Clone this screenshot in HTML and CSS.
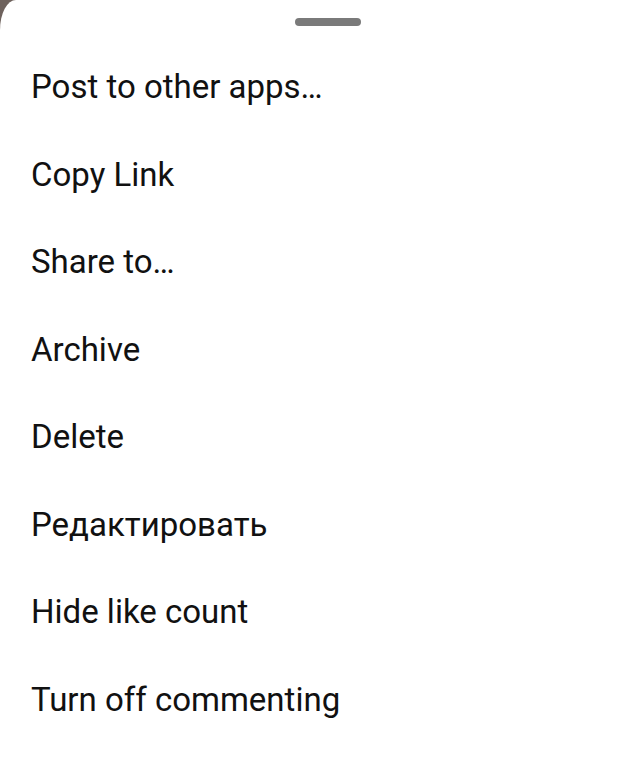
FILE: index.html
```html
<!DOCTYPE html>
<html lang="en">
<head>
    <meta charset="UTF-8">
    <meta name="viewport" content="width=device-width, initial-scale=1.0">
    <title>Post options</title>
    <link rel="stylesheet" href="styles.css">
</head>
<body>
    <div class="sheet">
        <div class="sheet-handle"></div>
        <ul class="sheet-menu">
            <li>Post to other apps…</li>
            <li>Copy Link</li>
            <li>Share to…</li>
            <li>Archive</li>
            <li>Delete</li>
            <li>Редактировать</li>
            <li>Hide like count</li>
            <li>Turn off commenting</li>
        </ul>
    </div>
</body>
</html>
```

FILE: styles.css
```css
html, body {
    margin: 0;
    height: 100%;
    background-color: #6e625d;
}

.sheet {
    min-height: 100%;
    background-color: #fff;
    border-top-left-radius: 16px 30px;
    padding-top: 18px;
    font-family: 'Roboto', 'Noto Sans', sans-serif;
}

/* drag handle sits a bit right of centre */
.sheet-handle {
    width: 66px;
    height: 8px;
    margin-left: 295px;
    border-radius: 4px;
    background-color: #7a7a7a;
}

.sheet-menu {
    list-style: none;
    margin: 17px 0 0;
    padding: 0;
}

.sheet-menu li {
    height: 87.5px;
    display: flex;
    align-items: center;
    padding-left: 31px;
    font-size: 33px;
    color: #111;
}
```
